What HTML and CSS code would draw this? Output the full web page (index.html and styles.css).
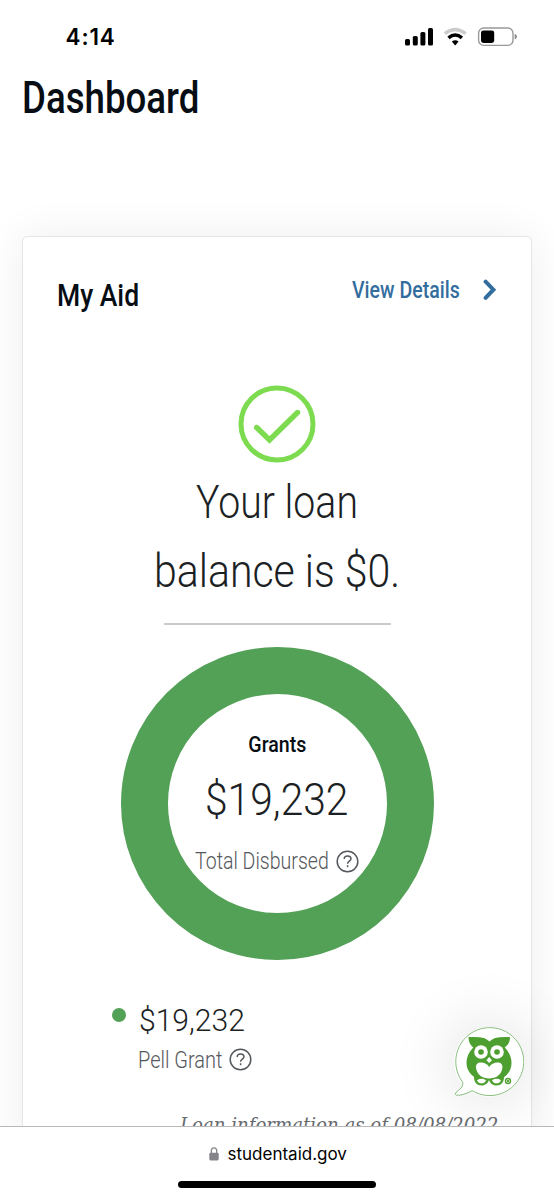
FILE: index.html
```html
<!DOCTYPE html>
<html lang="en">
<head>
<meta charset="utf-8">
<title>Dashboard</title>
<link rel="stylesheet" href="styles.css">
</head>
<body>
<div class="screen">
  <header class="status">
    <span class="time">4:14</span>
    <svg class="status-icons" width="114" height="24" viewBox="0 0 114 24">
      <rect x="1" y="13" width="5" height="6.5" rx="1.6"/>
      <rect x="8.8" y="10" width="5" height="9.5" rx="1.6"/>
      <rect x="16.4" y="6" width="5" height="13.5" rx="1.6"/>
      <rect x="24" y="2" width="5" height="17.5" rx="1.6"/>
      <path d="M40.8 7.7Q51.2-.6 61.6 7.7" fill="none" stroke="#ccc" stroke-width="3.4"/>
      <path d="M44.5 11.8Q51.2 6.2 57.9 11.8" fill="none" stroke="#000" stroke-width="3.6"/>
      <path d="M47.8 15.6Q51.2 12.8 54.6 15.6L51.2 19.4Z"/>
      <rect x="74.6" y="2" width="34.4" height="17.4" rx="5.2" fill="none" stroke="#999" stroke-width="1.4"/>
      <rect x="77" y="4.4" width="13.2" height="12.6" rx="2.4"/>
      <path d="M110.7 7.8Q113 9 113 10.7T110.7 13.6Z" fill="#888"/>
    </svg>
  </header>
  <main class="page">
    <h1 class="title"><span class="t-title">Dashboard</span></h1>
    <section class="card">
      <div class="card-head">
        <h2><span class="t-head">My Aid</span></h2>
        <a class="details"><span class="t-details">View Details</span>
          <svg width="14" height="22" viewBox="0 0 14 22"><path d="M2.6 2.6L10.4 10.7L2.6 18.8" fill="none" stroke="#336d9e" stroke-width="4" stroke-linecap="round"/></svg>
        </a>
      </div>
      <svg class="check" width="78" height="78" viewBox="0 0 78 78" fill="none" stroke="#7cdb4f">
        <circle cx="39" cy="39" r="36" stroke-width="5"/>
        <path d="M18.7 42.5L31.5 55L59.5 27.5" stroke-width="5.4" stroke-linejoin="miter" stroke-linecap="round"/>
      </svg>
      <p class="balance"><span class="t-b1">Your loan</span><span class="t-b2">balance is $0.</span></p>
      <hr class="rule">
      <div class="donut">
        <strong><span class="t-grants">Grants</span></strong>
        <div class="total"><span class="t-total">$19,232</span></div>
        <div class="caption"><span class="t-disb">Total Disbursed</span>
          <svg class="help" width="23" height="23" viewBox="0 0 23 23"><circle cx="11.5" cy="11.5" r="10.3"/><path d="M8.2 9.1C8.2 7 9.7 6 11.6 6C13.6 6 15 7.1 15 8.8C15 11.2 11.6 11.2 11.6 13.7"/><path d="M11.6 15.2V17.2"/></svg>
        </div>
      </div>
      <div class="legend">
        <i class="dot"></i>
        <div class="legend-text">
          <div class="amount"><span class="t-amount">$19,232</span></div>
          <div class="grant"><span class="t-pell">Pell Grant</span>
            <svg class="help" width="23" height="23" viewBox="0 0 23 23"><circle cx="11.5" cy="11.5" r="10.3"/><path d="M8.2 9.1C8.2 7 9.7 6 11.6 6C13.6 6 15 7.1 15 8.8C15 11.2 11.6 11.2 11.6 13.7"/><path d="M11.6 15.2V17.2"/></svg>
          </div>
        </div>
      </div>
      <p class="note"><span class="t-note">Loan information as of 08/08/2022</span></p>
    </section>
  </main>
  <div class="chat">
    <svg width="70" height="70" viewBox="0 0 70 70">
      <path d="M8.7 55.2A34 34 0 1 1 18 63.6C13 66.5 7 68.7 2.6 68.2Q.5 67.6 1.8 65.7C5.5 62.5 9.5 60 8.7 55.2Z" fill="#fff" stroke="#7cb870" stroke-width=".9"/>
      <g fill="#4d9f2f">
        <path d="M14.5 10Q25 9.5 30 11Q33 12.3 35.5 14.5Q38 12.3 41 11Q46 9.5 56 10C56 15 54 18 50.7 20.5C55 25 57.5 30 57.5 36C57.5 43 53.5 49 47 52H24C17 49 12.5 43 12.5 36C12.5 30 14.8 25 19.3 20.5C16.3 18 14.5 15 14.5 10Z"/>
        <path d="M20 50C20 55 23 58.5 27.5 58.5C31.5 58.5 34 56 35 53C36 56 38.5 58.5 42.5 58.5C47 58.5 50 55 50 50Z"/>
        <circle cx="54" cy="54" r="3.2"/>
      </g>
      <g fill="#fff">
        <circle cx="27" cy="25" r="6.8"/><circle cx="43" cy="25" r="6.8"/>
        <path d="M35.2 30L38 33.2L35.2 36L32.4 33.2Z"/>
        <path d="M35.2 40C37 37 40 35.5 43.5 35.5C47 35.5 48.8 37.5 48.4 41C47.5 47.5 42 51.5 35.2 51.5S23 47.5 22 41C21.6 37.5 23.5 35.5 27 35.5C30.5 35.5 33.5 37 35.2 40Z"/>
        <path d="M23 53.2Q27.5 50.5 32 53.2Q31 56.3 27.5 56.3T23 53.2ZM38 53.2Q42.5 50.5 47 53.2Q46 56.3 42.5 56.3T38 53.2Z"/>
      </g>
      <g fill="#4d9f2f"><circle cx="27" cy="25" r="2.8"/><circle cx="43" cy="25" r="2.8"/></g>
      <circle cx="54" cy="54" r="1.6" fill="none" stroke="#fff" stroke-width=".6"/>
    </svg>
  </div>
  <footer class="browser">
    <div class="url">
      <svg width="10" height="14" viewBox="0 0 10 14"><rect x=".3" y="5.8" width="9.4" height="7.7" rx="1.4" fill="#858589"/><path d="M2.3 6.5V3.8A2.7 2.9 0 0 1 7.7 3.8V6.5" fill="none" stroke="#858589" stroke-width="1.3"/></svg>
      <span class="t-url">studentaid.gov</span>
    </div>
    <div class="home"></div>
  </footer>
</div>
</body>
</html>
```
FILE: styles.css
```css
* { box-sizing: border-box; margin: 0; padding: 0; }
body { background: #fff; font-family: Roboto, "Liberation Sans", sans-serif; color: #1c1f24; }
span { display: inline-block; white-space: nowrap; transform-origin: left center; }
svg { display: block; flex: none; }
.screen { position: relative; width: 554px; height: 1200px; overflow: hidden; display: flex; flex-direction: column; }
.status { height: 73px; flex: none; display: flex; justify-content: space-between; padding: 26px 36px 0 65.5px; }
.time { font: 600 22.5px/22px Inter, sans-serif; letter-spacing: .9px; color: #000; }
.status-icons { width: 114px; }
.page { flex: 1; min-height: 0; overflow: hidden; display: flex; flex-direction: column; padding: 0 22px; }
.title { height: 163px; flex: none; font-size: 43.6px; line-height: 52px; font-weight: 500; color: #060d14; }
.card { flex: none; width: 510px; height: 1000px; border: 1.5px solid #e5e5e5; border-radius: 5px; background: #fff; box-shadow: 0 0 44px rgba(0,0,0,.07); display: flex; flex-direction: column; align-items: center; }
.card-head { align-self: stretch; height: 50px; margin-top: 33px; padding: 0 34px; display: flex; justify-content: space-between; align-items: center; }
h2 { font-size: 32px; line-height: 50px; font-weight: 500; color: #060d14; }
.details { display: flex; align-items: center; width: 145px; justify-content: space-between; margin-bottom: 10px; font-size: 23px; font-weight: 500; color: #336d9e; }
.check { margin-top: 65px; }
.balance { margin-top: 5px; display: flex; flex-direction: column; align-items: center; font-size: 46px; line-height: 68.5px; font-weight: 300; }
.balance span, .donut strong span, .total span { transform-origin: center; }
.rule { width: 227px; border: 0; border-top: 2px solid #c9cbcb; margin-top: 18px; }
.donut { width: 313px; height: 313px; margin-top: 21.5px; border: 47px solid #53a057; border-radius: 50%; display: flex; flex-direction: column; align-items: center; flex: none; }
.donut strong { font-size: 22.5px; line-height: 30px; font-weight: 500; margin-top: 35.5px; color: #060d14; }
.total { font-size: 43.6px; line-height: 60px; font-weight: 300; margin-top: 12px; }
.caption, .grant { display: flex; align-items: center; justify-content: space-between; font-weight: 300; color: #55585c; line-height: 30px; }
.caption { width: 164px; font-size: 23px; line-height: 32px; margin-top: 14px; }
.help { fill: none; stroke: #55585c; stroke-width: 1.5; }
.legend { align-self: flex-start; display: flex; gap: 13px; margin: 40px 0 0 88.5px; }
.dot { width: 14px; height: 14px; border-radius: 50%; background: #53a057; margin-top: 8px; }
.amount { font-size: 32px; line-height: 40px; font-weight: 300; }
.grant { width: 114px; font-size: 23.5px; margin-top: 5px; margin-left: -1px; }
.caption span { width: 0; padding-top: 1px; }
.grant span { width: 0; }
.note { align-self: flex-start; margin: 38.5px 0 0 157px; font: italic 19.5px/26px "DejaVu Serif", serif; color: #666a6e; }
.chat { position: absolute; left: 453.5px; top: 1027px; width: 70px; height: 70px; border-radius: 50%; box-shadow: 0 0 60px 8px rgba(0,0,0,.1); }
.browser { position: relative; flex: none; height: 74px; border-top: 1.3px solid #b9b9b9; background: #fff; display: flex; flex-direction: column; align-items: center; }
.url { display: flex; align-items: center; gap: 9px; height: 26px; margin-top: 14px; width: 137px; font: 400 17px/26px Inter, sans-serif; color: #000; }
.home { width: 198px; height: 7px; border-radius: 4px; background: #000; margin-top: 14px; }
.t-title { transform: scaleX(.841); }
.t-head { transform: scaleX(.829); }
.t-details { transform: scaleX(.85); width: 0; }
.t-b1 { transform: scaleX(.853); }
.t-b2 { transform: scaleX(.892); }
.t-grants { transform: scaleX(.87); }
.t-total { transform: scaleX(.935); }
.t-amount { transform: scaleX(.94); }
.t-disb { transform: scaleX(.85); }
.t-pell { transform: scaleX(.85); }
.t-note { transform: scaleX(.93); }
```
